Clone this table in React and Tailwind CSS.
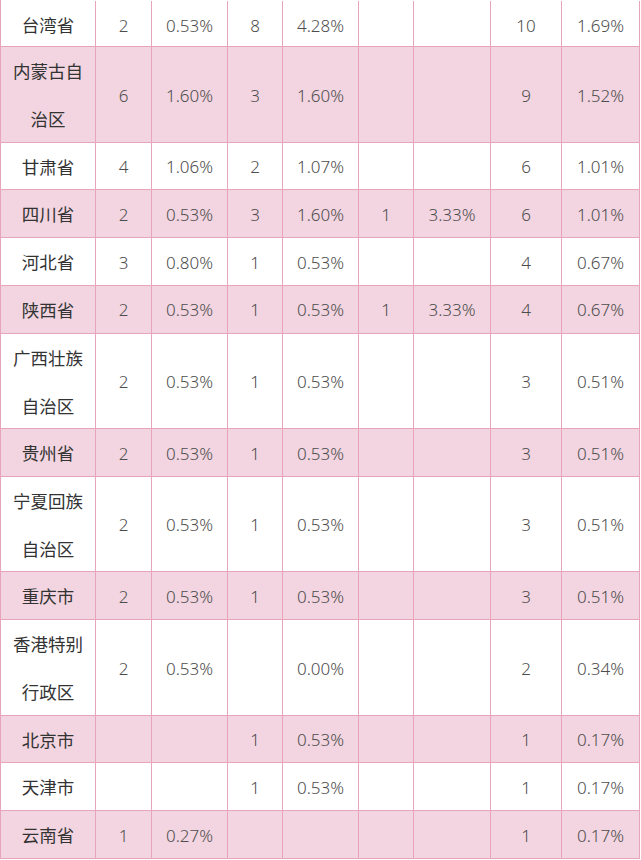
export default function App() {
  const rows = [
    ["台湾省", "2", "0.53%", "8", "4.28%", "", "", "10", "1.69%", false, false],
    ["内蒙古自治区", "6", "1.60%", "3", "1.60%", "", "", "9", "1.52%", true, true],
    ["甘肃省", "4", "1.06%", "2", "1.07%", "", "", "6", "1.01%", false, false],
    ["四川省", "2", "0.53%", "3", "1.60%", "1", "3.33%", "6", "1.01%", true, false],
    ["河北省", "3", "0.80%", "1", "0.53%", "", "", "4", "0.67%", false, false],
    ["陕西省", "2", "0.53%", "1", "0.53%", "1", "3.33%", "4", "0.67%", true, false],
    ["广西壮族自治区", "2", "0.53%", "1", "0.53%", "", "", "3", "0.51%", false, true],
    ["贵州省", "2", "0.53%", "1", "0.53%", "", "", "3", "0.51%", true, false],
    ["宁夏回族自治区", "2", "0.53%", "1", "0.53%", "", "", "3", "0.51%", false, true],
    ["重庆市", "2", "0.53%", "1", "0.53%", "", "", "3", "0.51%", true, false],
    ["香港特别行政区", "2", "0.53%", "", "0.00%", "", "", "2", "0.34%", false, true],
    ["北京市", "", "", "1", "0.53%", "", "", "1", "0.17%", true, false],
    ["天津市", "", "", "1", "0.53%", "", "", "1", "0.17%", false, false],
    ["云南省", "1", "0.27%", "", "", "", "", "1", "0.17%", true, false],
  ];
  return (
    <div
      className="w-[641px] h-[860px] overflow-hidden bg-white text-[17px] font-light text-[#4d4d4d]"
      style={{ fontFamily: '"Noto Sans", "Noto Sans CJK SC", sans-serif' }}
    >
      <div className="w-[640px] border-l border-[#e8a4bb]">
        {rows.map((r, i) => {
          const pink = r[9];
          const dbl = r[10];
          const h = i === 0 ? "h-[47px] pt-[1px]" : dbl ? "h-[95.53px]" : "h-[47.76px]";
          return (
            <div
              key={i}
              className={`grid grid-cols-[95px_56px_76px_55px_76px_55px_77px_71px_78px] border-b border-[#e8a4bb] ${h} ${
                pink ? "bg-[#f2d5e0]" : "bg-white"
              }`}
            >
              {r.slice(0, 9).map((c, j) => (
                <div
                  key={j}
                  className={`flex items-center justify-center text-center border-r border-[#e8a4bb] ${
                    j === 0 ? "px-[11px] text-[17.5px] leading-[48px] text-[#333333] font-normal" : "leading-none"
                  }`}
                >
                  {c}
                </div>
              ))}
            </div>
          );
        })}
      </div>
    </div>
  );
}
